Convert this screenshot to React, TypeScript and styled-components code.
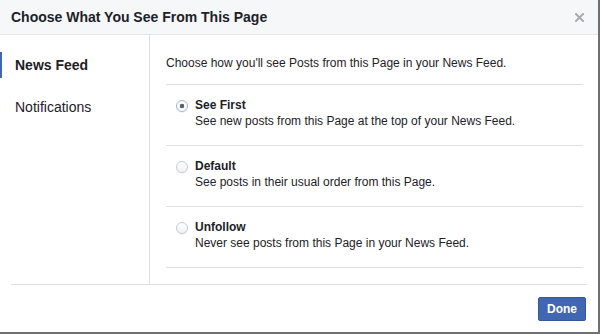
import React, { useState } from 'react';
import styled, { createGlobalStyle } from 'styled-components';

const GlobalStyle = createGlobalStyle`
  html, body {
    margin: 0;
    padding: 0;
    background: #ffffff;
  }
  body {
    font-family: "Liberation Sans", Arial, Helvetica, sans-serif;
    color: #1d2129;
    -webkit-font-smoothing: antialiased;
  }
`;

const Dialog = styled.div`
  width: 600px;
  height: 334px;
  box-sizing: border-box;
  background: #fff;
  border-right: 2px solid #6f7072;
  border-bottom: 2px solid #6f7072;
  display: flex;
  flex-direction: column;
`;

const Header = styled.div`
  height: 34px;
  flex-shrink: 0;
  background: #f6f7f9;
  border-bottom: 1px solid #e5e5e5;
  display: flex;
  align-items: center;
  justify-content: space-between;
  padding: 0 12px 0 11px;
`;

const Title = styled.h2`
  margin: 0;
  font-size: 14px;
  font-weight: bold;
  line-height: 18px;
  color: #1d2129;
`;

const CloseButton = styled.button`
  border: 0;
  background: none;
  padding: 0;
  width: 10px;
  height: 10px;
  margin-right: 2px;
  display: flex;
  align-items: center;
  justify-content: center;
  cursor: pointer;
`;

const Body = styled.div`
  flex: 1;
  display: flex;
  min-height: 0;
`;

const Sidebar = styled.nav`
  width: 149px;
  flex-shrink: 0;
  border-right: 1px solid #dddfe2;
  padding-top: 17px;
  display: flex;
  flex-direction: column;
  gap: 16px;
`;

const NavItem = styled.div<{ $active?: boolean }>`
  height: 26px;
  display: flex;
  align-items: center;
  padding-left: 15px;
  font-size: 14px;
  font-weight: ${(p) => (p.$active ? 'bold' : 'normal')};
  color: #1d2129;
  box-shadow: ${(p) => (p.$active ? 'inset 2px 0 0 #4267b2' : 'none')};
  cursor: pointer;
`;

const Content = styled.div`
  flex: 1;
  padding: 0 15px 0 16px;
`;

const Intro = styled.div`
  padding: 20px 0 13px;
  font-size: 12px;
  line-height: 16px;
  border-bottom: 1px solid #dddfe2;
`;

const Option = styled.label`
  display: flex;
  align-items: flex-start;
  gap: 7px;
  padding: 12px 0 16px 10px;
  border-bottom: 1px solid #dddfe2;
  cursor: pointer;
`;

const Radio = styled.span<{ $checked?: boolean }>`
  width: 12px;
  height: 12px;
  margin-top: 3px;
  flex-shrink: 0;
  box-sizing: border-box;
  border-radius: 50%;
  border: 1px solid ${(p) => (p.$checked ? '#9db4e0' : '#c9cbcf')};
  background: ${(p) =>
    p.$checked
      ? 'radial-gradient(circle, #5f6166 0 2px, #ffffff 2.6px)'
      : 'linear-gradient(#ffffff, #f1f2f4)'};
  box-shadow: 0 1px 1px rgba(0, 0, 0, 0.06);
`;

const OptionText = styled.div`
  display: flex;
  flex-direction: column;
  font-size: 12px;
  line-height: 16px;
`;

const OptionLabel = styled.span`
  font-weight: bold;
  color: #1d2129;
`;

const OptionDesc = styled.span`
  color: #1d2129;
`;

const Footer = styled.div`
  flex-shrink: 0;
  margin: 0 11px;
  border-top: 1px solid #dddfe2;
  padding: 12px 1px 11px 0;
  display: flex;
  justify-content: flex-end;
`;

const DoneButton = styled.button`
  height: 24px;
  padding: 0 8px;
  border: 1px solid #365899;
  border-radius: 2px;
  background: #4267b2;
  color: #fff;
  font-family: inherit;
  font-size: 12px;
  font-weight: bold;
  line-height: 22px;
  cursor: pointer;
`;

const options = [
  { id: 'first', label: 'See First', desc: 'See new posts from this Page at the top of your News Feed.' },
  { id: 'default', label: 'Default', desc: 'See posts in their usual order from this Page.' },
  { id: 'unfollow', label: 'Unfollow', desc: 'Never see posts from this Page in your News Feed.' },
];

const App: React.FC = () => {
  const [selected, setSelected] = useState('first');

  return (
    <>
      <GlobalStyle />
      <Dialog>
        <Header>
          <Title>Choose What You See From This Page</Title>
          <CloseButton aria-label="Close">
            <svg width="9" height="9" viewBox="0 0 9 9">
              <path d="M1 1 L8 8 M8 1 L1 8" stroke="#a8abb0" strokeWidth="2" strokeLinecap="square" />
            </svg>
          </CloseButton>
        </Header>
        <Body>
          <Sidebar>
            <NavItem $active>News Feed</NavItem>
            <NavItem>Notifications</NavItem>
          </Sidebar>
          <Content>
            <Intro>Choose how you'll see Posts from this Page in your News Feed.</Intro>
            {options.map((o) => (
              <Option key={o.id} onClick={() => setSelected(o.id)}>
                <Radio $checked={selected === o.id} role="radio" aria-checked={selected === o.id} />
                <OptionText>
                  <OptionLabel>{o.label}</OptionLabel>
                  <OptionDesc>{o.desc}</OptionDesc>
                </OptionText>
              </Option>
            ))}
          </Content>
        </Body>
        <Footer>
          <DoneButton>Done</DoneButton>
        </Footer>
      </Dialog>
    </>
  );
};

export default App;
